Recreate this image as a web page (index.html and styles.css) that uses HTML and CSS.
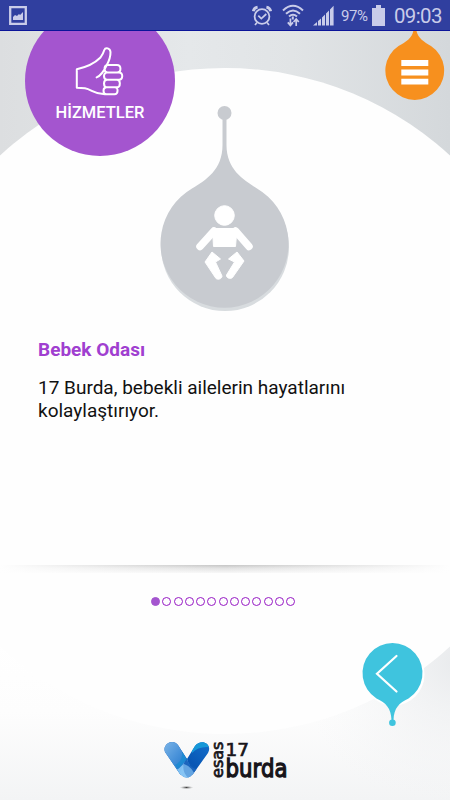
FILE: index.html
```html
<!DOCTYPE html>
<html lang="tr">
<head>
<meta charset="utf-8">
<title>Hizmetler</title>
<link rel="stylesheet" href="styles.css">
</head>
<body>
<div class="phone">
  <header class="status">
    <svg class="gallery" width="18" height="19" viewBox="0 0 18 19"><path d="M1.2 1.2h15.6v16.6H1.2z" fill="none" stroke="#c9cce9" stroke-width="2.3"/><path d="M4 14v-3l2-2 2 1 2-2 1 1 3-3v8z" fill="#c9cce9"/></svg>
    <svg class="alarm" width="20" height="22" viewBox="0 0 20 22" fill="none" stroke="#c9cce9"><circle cx="10" cy="11.5" r="7.4" stroke-width="1.8"/><path d="M1.3 6.2Q2 2.7 5.6 2.1M14.4 2.1Q18 2.7 18.7 6.2" stroke-width="2.8"/><path d="M6.3 10.6l3 3 5-4.6M5 17.5l-2 2.5M15 17.5l2 2.5" stroke-width="1.7"/></svg>
    <svg class="wifi" width="22" height="23" viewBox="0 0 22 23" fill="none" stroke="#c9cce9" stroke-width="2"><path d="M1 6.400Q11-2.800 21 6.400M4 9.700Q11 3.300 18 9.700M7 12.600Q11 9 15 12.600"/><path d="M10.800 12.500v3"/><path d="M8.400 14.500v7M5.800 18.400l2.600 3 2.600-3M14.200 22v-7M11.600 18l2.600-3 2.600 3" stroke-width="1.700"/></svg>
    <svg class="signal" width="21" height="21" viewBox="0 0 21 21" fill="#c9cce9"><path d="M0 20.5L4 17v3.500zM5 16l3-2.600v7.100H5zM9 12.400l3-3v11.100H9zM13 8.400l3-3v15.100h-3zM17 4.400L20.600 .8v19.700H17z"/></svg>
    <span class="percent">97%</span>
    <svg class="battery" width="13" height="21" viewBox="0 0 13 21"><path d="M4 0h5v3h4v18H0V3h4z" fill="#c9cce9"/></svg>
    <span class="clock">09:03</span>
  </header>
  <main class="screen">
    <svg class="backdrop" width="450" height="769" viewBox="0 31 450 769">
      <defs>
        <linearGradient id="sky" x1="0" y1="0" x2="1" y2="0"><stop offset="0" stop-color="#dcdee0"/><stop offset=".42" stop-color="#e5e8ea"/><stop offset=".65" stop-color="#e1e4e6"/><stop offset="1" stop-color="#d4d8db"/></linearGradient>
        <linearGradient id="floor" x1="0" y1="0" x2="0" y2="1"><stop offset="0" stop-color="#fff"/><stop offset=".45" stop-color="#fdfdfd"/><stop offset="1" stop-color="#f3f4f5"/></linearGradient>
        <radialGradient id="corner" gradientUnits="userSpaceOnUse" cx="460" cy="660" r="160"><stop offset="0" stop-color="#e8eaec"/><stop offset="1" stop-color="#f4f5f6" stop-opacity="0"/></radialGradient>
      </defs>
      <path d="M0 31h450v320H0z" fill="url(#sky)"/>
      <path d="M0 351h450v290H0z" fill="#fefefe"/>
      <path d="M0 640h450v160H0z" fill="url(#floor)"/>
      <path d="M260 640h190v160H260z" fill="url(#corner)"/>
      <circle cx="225" cy="401" r="333" fill="#fefefe"/>
    </svg>
    <section class="badge">
      <svg width="50" height="50" viewBox="0 0 50 50" fill="none" stroke="#fff" stroke-width="2" stroke-linejoin="round" stroke-linecap="round"><path d="M1.800 22.200C12 20 20 16 25.500 10.500C28 7 28.700 5 29.300 3C30.500-.2 35.200 1.200 35.500 5C35.600 9 34 14 31.800 18H42C46.600 18 46.600 25.400 42 25.400H32.500C28.600 25.400 28.800 18.800 31.800 18C29 24 26.500 28.500 21.600 30.400M42 25.400H44C48.300 25.400 48.300 32.800 44 32.800H32C28 32.800 28 25.400 32 25.400M42 32.800C45.800 32.800 45.800 40.200 42 40.200H32C28 40.200 28 32.800 32 32.800M40 40.200C43.500 40.200 43.500 47.200 39.500 47.200H31.500C27.500 47.200 27.500 40.200 31.500 40.200M31.500 47.200C20 48 17 42.500 10 41.200C7 40.800 4 40.800 1.800 40.800V22.200"/></svg>
      <h1>HİZMETLER</h1>
    </section>
    <svg class="menu" width="60" height="70" viewBox="0 0 60 70"><path d="M29.500 0h2C33 7 39 11 46 15A29.400 29.400 0 1 1 13.500 15C21 11 27 7 28.300 0z" fill="#f7901e"/><path d="M16.300 32h27M16.300 41.500h27M16.300 50.700h27" stroke="#fff" stroke-width="5.800"/></svg>
    <svg class="drop" width="132" height="208" viewBox="159 105 132 208">
      <circle cx="225" cy="247" r="64" fill="#d8dcdf"/>
      <circle cx="224.500" cy="113" r="7" fill="#c8cbd0"/>
      <path d="M222.500 116h4v29C226.500 170 244 180 257 188.500A64 64 0 1 1 192 188.500C206 180 222.500 170 222.500 145z" fill="#c8cbd0"/>
      <g fill="#fff" stroke="#fff" stroke-linejoin="round"><circle cx="224.500" cy="215.500" r="9.800"/><path d="M212.500 228.500h24.500l-1.500 18h-22z" stroke-width="1"/><path d="M214 231L200 246.500M235.500 231L249 246.500" stroke-width="7.500" stroke-linecap="round"/><path d="M212 252l8.500 7-5 3 6.500 14c0 3-4 4-6 2.500L205 262zM237 252l-8.500 7 6 3-8 13c-.5 3 4 4.500 6 2.500L244 261z" stroke-width="1"/></g>
    </svg>
    <article class="copy"><h2>Bebek Odası</h2><p>17 Burda, bebekli ailelerin hayatlarını kolaylaştırıyor.</p></article>
    <div class="divider"></div>
    <nav class="pages"><i class="current"></i><i></i><i></i><i></i><i></i><i></i><i></i><i></i><i></i><i></i><i></i><i></i><i></i></nav>
    <svg class="back" width="66" height="86" viewBox="360 641 66 86"><circle cx="393.500" cy="674.500" r="31" fill="#fff"/><path d="M391.500 720C391 708 386 703 376.500 698.500A30 30 0 1 1 408.500 698.500C399 703 394 708 393.500 720z" fill="#3fc4de"/><circle cx="392.400" cy="722.700" r="3.300" fill="#3fc4de"/><path d="M396.500 656L377 673.800l19.500 17.700" fill="none" stroke="#fff" stroke-width="2.200" stroke-linecap="round"/></svg>
    <svg class="logo" width="130" height="54" viewBox="162 738 130 54">
      <defs><linearGradient id="left" x1="0" y1="0" x2="1" y2="1"><stop offset="0" stop-color="#8bbfeb"/><stop offset=".5" stop-color="#4a93da"/><stop offset="1" stop-color="#1269c4"/></linearGradient><linearGradient id="right" x1="0" y1="1" x2="1" y2="0"><stop offset="0" stop-color="#3687d5"/><stop offset=".5" stop-color="#0856b4"/><stop offset="1" stop-color="#1674d0"/></linearGradient>
      <clipPath id="vee"><path d="M165 752C162 744 173 738 178 745L187 759L195 746C201 738 213 744 208 753L193 774Q187 781 180 774z"/></clipPath>
      <radialGradient id="spot"><stop offset="0" stop-color="#444"/><stop offset="1" stop-color="#aaa" stop-opacity="0"/></radialGradient></defs>
      <g clip-path="url(#vee)"><path d="M160 738h52v42h-52z" fill="url(#right)"/><path d="M160 738h14l16 27-9 10h-21z" fill="url(#left)"/><path d="M192 753Q198 746 210 747V738H190z" fill="#1698d8"/><path d="M173 772Q183 767 187 758L192 780H173z" fill="#7fc0f2"/><path d="M184 763Q181 773 191 780L202 770Q188 770 187 757z" fill="#1b65bd"/><path d="M184 764Q193 767 196 778L188 780L178 776z" fill="#8bc6f4" opacity=".65"/><path d="M182 751l5 8-9 10-3-4q8-4 7-14z" fill="#128bd2" opacity=".7"/></g>
      <ellipse cx="186.500" cy="787.500" rx="7" ry="1.700" fill="url(#spot)"/>
      <g class="wordmark"><text transform="translate(223.300 778) rotate(-90)" font-size="15.500" textLength="36.500" lengthAdjust="spacingAndGlyphs">esas</text><text x="225.500" y="755.700" font-size="18.500" textLength="23.500" lengthAdjust="spacingAndGlyphs">17</text><text class="heavy" x="225.500" y="776.700" font-size="24.500" textLength="62" lengthAdjust="spacingAndGlyphs">burda</text></g>
    </svg>
  </main>
</div>
</body>
</html>
```
FILE: styles.css
```css
* { box-sizing: border-box; }
body { margin: 0; font-family: Roboto, "Noto Sans", sans-serif; }
svg { display: block; flex: none; overflow: visible; }
.phone { width: 450px; height: 800px; display: flex; flex-direction: column; overflow: hidden; }
.status { height: 31px; flex: none; display: flex; align-items: center; padding: 1px 8px 0 9px; background: #303f9f; border-bottom: 1px solid #0b1499; color: #c9cce9; }
.alarm { margin-left: auto; margin-right: 10px; }
.wifi { margin-right: 9px; }
.signal { margin-right: 7px; }
.percent { font-size: 15px; width: 28px; white-space: nowrap; letter-spacing: -.4px; }
.battery { margin: 0 9px 0 3px; }
.clock { font-size: 20.4px; line-height: 28px; width: 48px; letter-spacing: -.6px; white-space: nowrap; padding-top: 1px; }
.screen { position: relative; height: 769px; display: flex; flex-direction: column; }
.backdrop { position: absolute; inset: 0; z-index: -1; overflow: hidden; }
.badge { position: absolute; left: 25px; top: -25px; width: 150px; height: 150px; border-radius: 50%; background: #a455cf; clip-path: inset(25px 0 0); display: flex; flex-direction: column; align-items: center; padding-top: 41px; color: #fff; }
.badge h1 { margin: 6px 0 0; font-size: 16.5px; line-height: 20px; font-weight: 500; }
.menu { position: absolute; left: 384.5px; top: 0; }
.drop { margin: 74px 0 0 159px; }
.copy { height: 252px; padding: 25px 38px 0; }
.copy h2 { margin: 0; color: #a03fd0; font-size: 19px; line-height: 24px; font-weight: 700; }
.copy p { margin: 14px 0 0; width: 330px; color: #111; font-size: 19px; line-height: 23px; }
.divider { height: 8px; background: linear-gradient(90deg, #fefefe 0%, transparent 50%, #fefefe 100%), linear-gradient(#c5c5c5, #e2e2e2 40%, #f8f8f8); }
.pages { height: 9px; margin: 24px 0 0 151px; display: flex; gap: 2.28px; }
.pages i { width: 9px; height: 9px; border: 1px solid #9619c4; border-radius: 50%; }
.pages .current { background: #a455cf; border-color: #a455cf; }
.back { position: absolute; left: 360px; top: 610px; }
.logo { margin: 132px 0 0 162px; }
.wordmark { font-family: "DejaVu Sans", sans-serif; fill: #17151a; stroke: #17151a; stroke-width: .7px; }
.wordmark .heavy { stroke-width: 1.3px; }
```
